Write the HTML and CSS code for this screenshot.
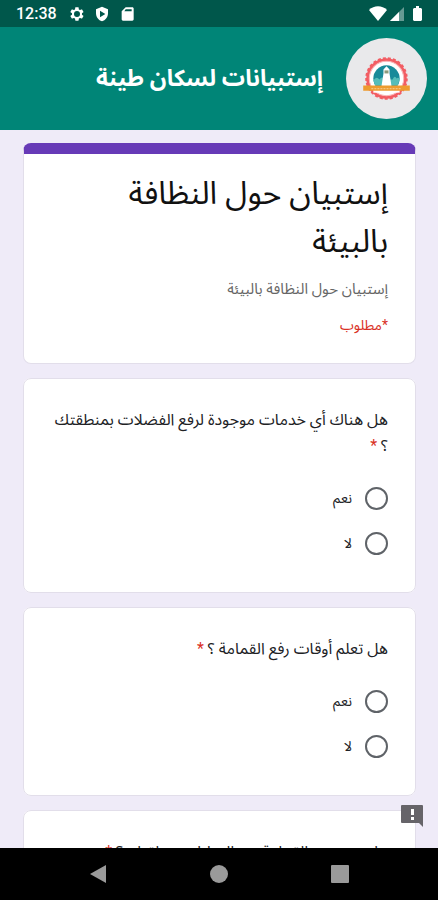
FILE: index.html
```
<!DOCTYPE html>
<html lang="ar">
<head>
    <meta charset="UTF-8">
    <meta name="viewport" content="width=device-width, initial-scale=1.0">
    <title>إستبيانات لسكان طينة</title>
    <link rel="stylesheet" href="styles.css">
</head>
<body>
    <div class="status-bar">
        <span class="clock">12:38</span>
        <svg class="status-icon" viewBox="0 0 24 24"><path fill-rule="evenodd" d="M19.4 13c0-.3.1-.7.1-1s0-.7-.1-1l2.1-1.6c.2-.2.3-.4.1-.7l-2-3.400c-.1-.2-.4-.3-.6-.2l-2.500 1c-.5-.4-1.100-.7-1.700-1l-.4-2.600c0-.3-.2-.5-.5-.5h-4c-.2 0-.5.2-.5.5L9 5.100c-.6.300-1.200.6-1.700 1l-2.500-1c-.2-.1-.5 0-.6.2l-2 3.400c-.1.300 0 .5.100.7L4.500 11v2l-2.200 1.600c-.1.200-.2.400-.1.700l2 3.400c.1.200.4.300.6.200l2.500-1c.5.400 1.100.7 1.700 1l.4 2.600c0 .3.300.5.500.5h4c.3 0 .5-.2.5-.5l.4-2.600c.6-.3 1.200-.6 1.700-1l2.500 1c.2.100.5 0 .6-.2l2-3.400c.2-.3.100-.5-.1-.7zM12 16.500a4.500 4.500 0 1 1 0-9 4.500 4.500 0 0 1 0 9z"/></svg>
        <svg class="status-icon" viewBox="0 0 24 24"><path fill-rule="evenodd" d="M12 1L3 5v6c0 5.500 3.800 10.700 9 12 5.200-1.300 9-6.500 9-12V5zM9 7l8 5-8 5z"/></svg>
        <svg class="status-icon" viewBox="0 0 24 24"><path fill-rule="evenodd" d="M20 2H10L4 8v12c0 1.100.9 2 2 2h14c1.100 0 2-.9 2-2V4c0-1.100-.9-2-2-2zM10 5h9v3H8z"/></svg>
        <div class="signals">
            <svg class="wifi" viewBox="0 0 18 15"><path d="M9 15L0 4C5-1 13-1 18 4z"/></svg>
            <svg class="cell" viewBox="0 0 14 14"><path d="M14 0v14H0z" opacity=".4"/><path d="M9 5v9H0z"/></svg>
            <svg class="battery" viewBox="0 0 9 15"><path d="M3 0h3v2h2l1 1v11l-1 1H1l-1-1V3l1-1h2z"/></svg>
        </div>
    </div>

    <header class="app-bar" dir="rtl">
        <svg class="logo" viewBox="0 0 80 80">
            <circle cx="40" cy="40" r="40" fill="#e9e9eb"/>
            <circle cx="40" cy="40" r="20" fill="#f25d63"/>
            <circle cx="40" cy="40" r="20" fill="none" stroke="#f25d63" stroke-width="2" stroke-dasharray="3 2"/>
            <circle cx="40" cy="40" r="17" fill="#fff" stroke="#f9b6b8"/>
            <circle cx="40" cy="40" r="13" fill="#188a99"/>
            <path d="M27 42q3-5 6-1 3-4 5 0h8q2-5 4-1 2-2 3 1l-2 6H29z" fill="#55bdb9"/>
            <path d="M35 48l2-13v-4l3-3 3 3v4l2 13z" fill="#fff"/>
            <path d="M38 32h4v3h-4z" fill="#8b9a7b"/>
            <path d="M27 50h26v4H27z" fill="#fff"/>
            <path d="M17 47h46v5H17z" fill="#ed9b2f"/>
            <path d="M25 50h30" stroke="#f5c57c" stroke-dasharray="2 1"/>
        </svg>
        <h1 class="app-title">إستبيانات لسكان طينة</h1>
    </header>

    <main class="content" dir="rtl">
        <form class="form">
            <section class="card intro">
                <h2 class="form-title">إستبيان حول النظافة بالبيئة</h2>
                <p class="description">إستبيان حول النظافة بالبيئة</p>
                <p class="required-note">*مطلوب</p>
            </section>

            <fieldset class="card question">
                <legend class="question-text">هل هناك أي خدمات موجودة لرفع الفضلات بمنطقتك ؟ <span class="star">*</span></legend>
                <label class="option"><input type="radio" name="service" value="yes"> نعم</label>
                <label class="option"><input type="radio" name="service" value="no"> لا</label>
            </fieldset>

            <fieldset class="card question">
                <legend class="question-text">هل تعلم أوقات رفع القمامة ؟ <span class="star">*</span></legend>
                <label class="option"><input type="radio" name="times" value="yes"> نعم</label>
                <label class="option"><input type="radio" name="times" value="no"> لا</label>
            </fieldset>

            <fieldset class="card question">
                <legend class="question-text">هل يتم جمع القمامة من المنازل بمنطقتك ؟ <span class="star">*</span></legend>
                <label class="option"><input type="radio" name="homes" value="yes"> نعم</label>
                <label class="option"><input type="radio" name="homes" value="no"> لا</label>
            </fieldset>
        </form>

        <button class="report" type="button" aria-label="الإبلاغ عن مشكلة">
            <svg viewBox="0 0 22 22"><path d="M1 0h20q1 0 1 1v21l-4-4H1q-1 0-1-1V1q0-1 1-1z" fill="#666469"/><path d="M10 4h3v6h-3zM10 12h3v3h-3z" fill="#fff"/></svg>
        </button>
    </main>

    <nav class="nav-bar">
        <button class="nav-button" type="button" aria-label="Back"><svg viewBox="0 0 18 18"><path d="M17 0v18L1 9z"/></svg></button>
        <button class="nav-button" type="button" aria-label="Home"><svg viewBox="0 0 18 18"><circle cx="9" cy="9" r="9"/></svg></button>
        <button class="nav-button" type="button" aria-label="Recent"><svg viewBox="0 0 18 18"><rect width="18" height="18" rx="1"/></svg></button>
    </nav>
</body>
</html>
```
FILE: styles.css
```
* {
    box-sizing: border-box;
}

body {
    font-family: Roboto, "Noto Sans Arabic", "Noto Sans", sans-serif;
    background-color: #efebf8;
    margin: 0;
    height: 100vh;
    display: flex;
    flex-direction: column;
    overflow: hidden;
    color: #202124;
}

.status-bar {
    display: flex;
    align-items: center;
    gap: 9px;
    height: 27px;
    padding: 0 16px;
    background-color: #00574b;
    color: #fff;
    fill: #fff;
}

.clock {
    font-size: 16px;
    font-weight: 500;
    margin-right: 3px;
}

.status-icon {
    width: 16px;
    height: 16px;
}

.signals {
    display: flex;
    align-items: center;
    gap: 3px;
    margin-left: auto;
}

.wifi {
    width: 18px;
    height: 15px;
}

.cell {
    width: 14px;
    height: 14px;
}

.battery {
    width: 9px;
    height: 15px;
    margin-left: 6px;
}

.app-bar {
    display: flex;
    align-items: center;
    gap: 23px;
    height: 103px;
    padding: 0 11px;
    background-color: #008577;
    color: #fff;
}

.logo {
    width: 81px;
    height: 81px;
}

.app-title {
    margin: 0;
    font-size: 23px;
    font-weight: bold;
}

.content {
    position: relative;
    flex: 1;
    min-height: 0;
    overflow: hidden;
}

.form {
    display: flex;
    flex-direction: column;
    gap: 14px;
    padding: 13px 22px 13px 23px;
}

.card {
    min-width: 0;
    margin: 0;
    padding: 28px 27px 26px;
    background-color: #fff;
    border: 1px solid #e2deea;
    border-radius: 8px;
}

.intro {
    border-top: 11px solid #673ab7;
    padding-top: 15px;
}

.form-title {
    margin: 0;
    font-size: 32px;
    font-weight: normal;
    line-height: 48px;
    color: #111;
}

.description,
.required-note {
    margin: 12px 0 0;
    font-size: 15px;
    line-height: 24px;
    color: #666;
}

.required-note {
    font-size: 14px;
    color: #d93025;
}

.question-text {
    float: right;
    width: 100%;
    padding: 0;
    margin-bottom: 17px;
    font-size: 16px;
    line-height: 26px;
}

.star {
    color: #d93025;
}

.option {
    clear: both;
    display: flex;
    align-items: center;
    gap: 13px;
    height: 45px;
    font-size: 14px;
}

.option input {
    appearance: none;
    width: 23px;
    height: 23px;
    margin: 0;
    border: 2px solid #5f6368;
    border-radius: 50%;
}

.option input:checked {
    border: 7px solid #673ab7;
}

.report {
    position: absolute;
    right: 15px;
    bottom: 21px;
    width: 22px;
    height: 22px;
    padding: 0;
    border: none;
    background: none;
    cursor: pointer;
}

.nav-bar {
    display: flex;
    align-items: center;
    justify-content: center;
    gap: 103px;
    height: 52px;
    background-color: #000;
}

.nav-button {
    width: 18px;
    height: 18px;
    padding: 0;
    border: none;
    background: none;
    fill: #9a9a9a;
}

.nav-button svg,
.report svg {
    display: block;
}
```
